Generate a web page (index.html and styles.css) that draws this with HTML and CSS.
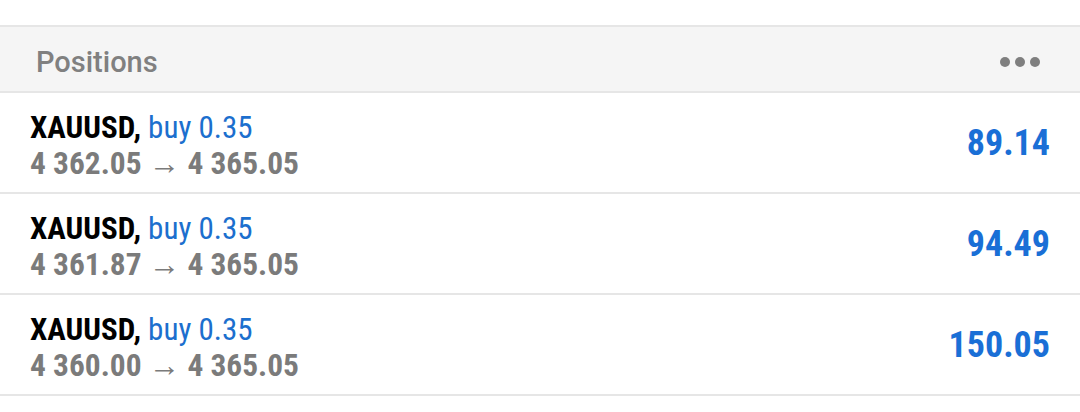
FILE: index.html
```html
<!DOCTYPE html>
<html>
<head>
<meta charset="utf-8">
<link rel="stylesheet" href="styles.css">
</head>
<body>
<div class="top"></div>
<div class="header">
  <span class="title">Positions</span>
  <span class="dots"><i></i><i></i><i></i></span>
</div>
<div class="row">
  <div class="left">
    <div class="l1"><span class="sym">XAUUSD,</span> <span class="side">buy 0.35</span></div>
    <div class="l2">4 362.05 → 4 365.05</div>
  </div>
  <div class="profit">89.14</div>
</div>
<div class="row">
  <div class="left">
    <div class="l1"><span class="sym">XAUUSD,</span> <span class="side">buy 0.35</span></div>
    <div class="l2">4 361.87 → 4 365.05</div>
  </div>
  <div class="profit">94.49</div>
</div>
<div class="row">
  <div class="left">
    <div class="l1"><span class="sym">XAUUSD,</span> <span class="side">buy 0.35</span></div>
    <div class="l2">4 360.00 → 4 365.05</div>
  </div>
  <div class="profit">150.05</div>
</div>
</body>
</html>
```
FILE: styles.css
```css
html, body {
  margin: 0;
  padding: 0;
  background: #ffffff;
  width: 1080px;
  height: 412px;
  overflow: hidden;
  font-family: "Roboto Condensed", "Liberation Sans Narrow", Roboto, sans-serif;
}
.top {
  height: 25px;
  border-bottom: 2px solid #e6e6e6;
}
.header {
  height: 66px;
  box-sizing: border-box;
  padding: 6px 40px 0 36px;
  background: #f5f5f5;
  border-bottom: 2px solid #e6e6e6;
  display: flex;
  align-items: center;
  justify-content: space-between;
}
.title {
  font-family: Roboto, sans-serif;
  font-weight: 500;
  font-size: 29px;
  color: #808080;
}
.dots {
  display: flex;
  gap: 5px;
}
.dots i {
  width: 10px;
  height: 10px;
  border-radius: 50%;
  background: #7f7f7f;
}
.row {
  height: 101px;
  box-sizing: border-box;
  border-bottom: 2px solid #e6e6e6;
  display: flex;
  align-items: center;
  justify-content: space-between;
  padding: 0 30px;
}
.left {
  display: flex;
  flex-direction: column;
  padding-top: 6px;
}
.l1 {
  font-size: 31px;
  line-height: 36px;
  white-space: nowrap;
}
.sym {
  font-weight: 700;
  color: #000000;
}
.side {
  color: #1c6fce;
}
.l2 {
  font-size: 31.4px;
  line-height: 36px;
  font-weight: 700;
  color: #7b7b7b;
  white-space: nowrap;
}
.profit {
  font-size: 36px;
  font-weight: 700;
  color: #1a6fd6;
}
```
